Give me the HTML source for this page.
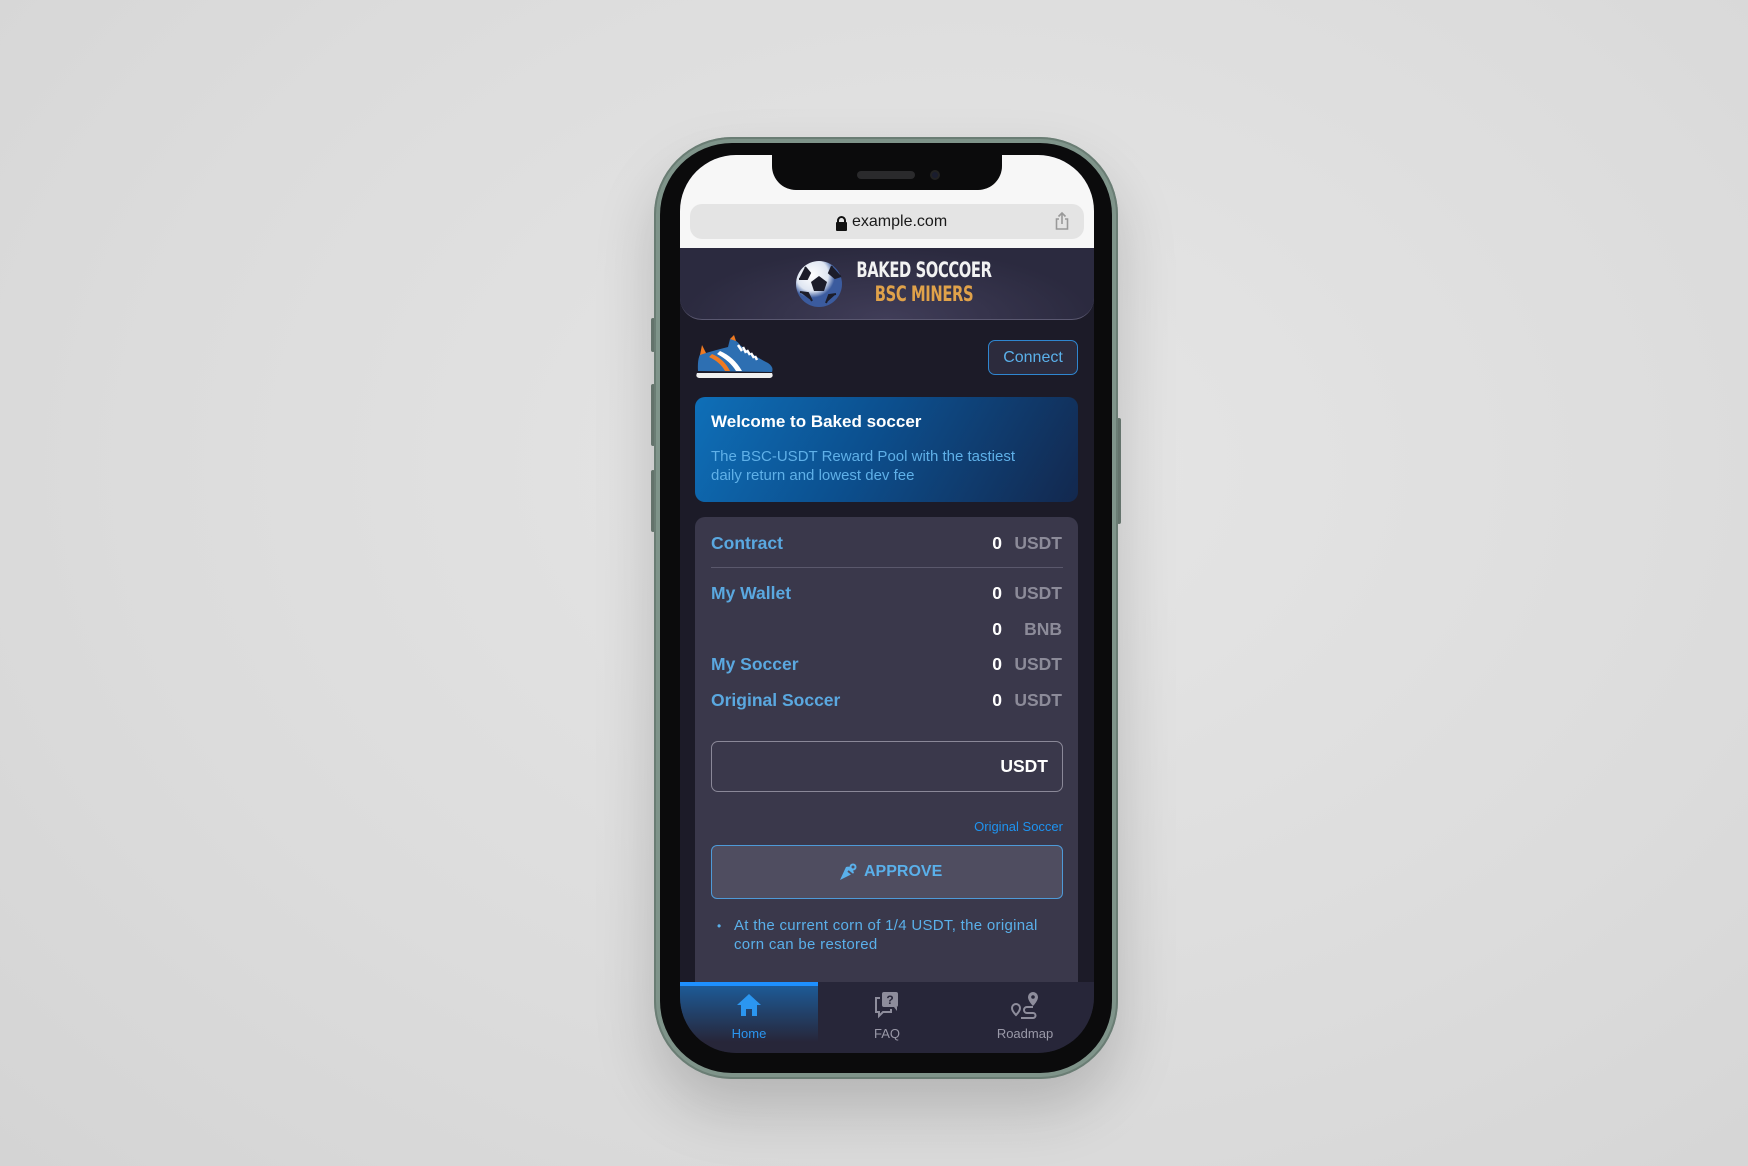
<!DOCTYPE html>
<html><head><meta charset="utf-8"><style>
*{margin:0;padding:0;box-sizing:border-box}
html,body{width:1748px;height:1166px;overflow:hidden}
body{background:radial-gradient(ellipse at 55% 40%,#e6e6e6 0%,#dcdcdc 60%,#d4d4d4 100%);font-family:"Liberation Sans",Roboto,sans-serif;position:relative}
.a{position:absolute;white-space:nowrap}
.frame{left:654px;top:137px;width:464px;height:942px;border-radius:78px;background:#7f948a;box-shadow:0 30px 60px rgba(0,0,0,.18),inset 0 0 0 2px #6a7d74}
.bezel{left:660px;top:143px;width:452px;height:930px;border-radius:72px;background:#0b0b0c}
.screen{left:680px;top:155px;width:414px;height:898px;border-radius:56px;background:#1c1b28;overflow:hidden}
.lbl{left:31px;font-size:17.5px;font-weight:bold;color:#5aa8e0}
.zero{font-size:17.5px;font-weight:bold;color:#fff;text-align:right;width:30px;left:292px}
.unit{font-size:17.5px;font-weight:bold;color:#8c8b99;text-align:right;width:60px;left:322px}
.wrap{white-space:normal}
</style></head><body>
<div class="a" style="left:651px;top:318px;width:4px;height:34px;background:#6d7e76;border-radius:2px"></div>
<div class="a" style="left:651px;top:384px;width:4px;height:62px;background:#6d7e76;border-radius:2px"></div>
<div class="a" style="left:651px;top:470px;width:4px;height:62px;background:#6d7e76;border-radius:2px"></div>
<div class="a" style="left:1117px;top:418px;width:4px;height:106px;background:#6d7e76;border-radius:2px"></div>
<div class="a frame"></div>
<div class="a bezel"></div>
<div class="a screen">
  <div class="a" style="left:0;top:0;width:414px;height:93px;background:#f7f7f7"></div>
  <div class="a" style="left:92px;top:0;width:230px;height:35px;background:#0b0b0c;border-radius:0 0 24px 24px"></div>
  <div class="a" style="left:177px;top:16px;width:58px;height:8px;background:#2a2a2c;border-radius:4px"></div>
  <div class="a" style="left:250px;top:15px;width:10px;height:10px;background:#1a1d2e;border-radius:50%;border:2px solid #222"></div>
  <div class="a" style="left:10px;top:49px;width:394px;height:35px;background:#e4e4e4;border-radius:12px"></div>
  <div class="a" style="left:157px;top:61px;width:9px;height:8px;border:2px solid #111;border-bottom:none;border-radius:5px 5px 0 0"></div>
  <div class="a" style="left:156px;top:67px;width:11px;height:9px;background:#111;border-radius:1px"></div>
  <div class="a" style="left:172px;top:58px;font-size:16px;color:#1a1a1a">example.com</div>
  <svg class="a" style="left:374px;top:56px" width="16" height="20" viewBox="0 0 16 20"><path d="M8 2v11M4.5 5.5L8 2l3.5 3.5M5 8H2.5v10h11V8H11" fill="none" stroke="#999" stroke-width="1.6"/></svg>
  <div class="a" style="left:0;top:93px;width:414px;height:72px;background:radial-gradient(ellipse at 50% 100%,#403d58,#2b2a3f 70%);border-radius:0 0 22px 22px;border-bottom:1px solid #5a5870"></div>
  <svg class="a" style="left:114px;top:104px" width="50" height="50" viewBox="0 0 50 50">
    <defs><radialGradient id="bg" cx="35%" cy="30%"><stop offset="0" stop-color="#fff"/><stop offset=".7" stop-color="#dfe6f2"/><stop offset="1" stop-color="#3b5b9e"/></radialGradient></defs>
    <circle cx="25" cy="25" r="23" fill="url(#bg)"/>
    <polygon points="25,17 33,23 30,32 20,32 17,23" fill="#1c1d2a"/>
    <path d="M11 8l5 6-3 6-8 0M38 7l-3 7 6 5 6-2M6 33l8 1 4 8M42 35l-7 1-3 8" fill="#1c1d2a" stroke="#1c1d2a" stroke-width="2"/>
  </svg>
  <div class="a" style="left:144px;top:103px;width:200px;text-align:center;font-family:'DejaVu Sans Condensed','Liberation Sans Narrow',sans-serif;font-weight:bold;font-size:21px;color:#f2f2f2;transform:scaleX(.78);letter-spacing:-0.5px">BAKED SOCCOER</div>
  <div class="a" style="left:144px;top:127px;width:200px;text-align:center;font-family:'DejaVu Sans Condensed','Liberation Sans Narrow',sans-serif;font-weight:bold;font-size:21px;color:#e0a24a;transform:scaleX(.78);letter-spacing:-0.5px">BSC MINERS</div>
  <svg class="a" style="left:14px;top:178px" width="82" height="48" viewBox="0 0 82 48">
    <path d="M3 40 L78 40 Q80 44 76 45 L5 45 Q1 44 3 40Z" fill="#f0f0f0"/>
    <path d="M4 38 Q3 22 9 18 L12 20 Q22 17 34 14 L36 6 Q42 6 46 12 Q58 22 74 30 Q80 34 78 39 Z" fill="#2d6fb2"/>
    <path d="M8 12 L12 20 L6 22Z" fill="#f07a21"/>
    <path d="M36 6 L40 2 L42 8Z" fill="#f07a21"/>
    <path d="M18 21 Q30 26 36 38 L31 38 Q26 29 15 24Z" fill="#f07a21"/>
    <path d="M26 18 Q40 24 48 38 L42 38 Q36 28 23 21Z" fill="#fff"/>
    <path d="M44 12l4 6M49 14l3 6M53 17l3 5M57 20l3 5M61 23l2 4" stroke="#fff" stroke-width="2.5"/>
  </svg>
  <div class="a" style="left:308px;top:185px;width:90px;height:35px;border:1.5px solid #2f86d0;border-radius:7px;background:#2c2b3d;color:#5ab0ea;font-size:16px;text-align:center;line-height:33px">Connect</div>
  <div class="a" style="left:15px;top:242px;width:383px;height:105px;border-radius:10px;background:linear-gradient(120deg,#0e6fb8 0%,#0c4f8e 45%,#13284e 100%)"></div>
  <div class="a" style="left:31px;top:257px;font-size:17px;font-weight:bold;color:#fff">Welcome to Baked soccer</div>
  <div class="a wrap" style="left:31px;top:292px;font-size:15px;line-height:19px;color:#5fb0e8;width:310px">The BSC-USDT Reward Pool with the tastiest daily return and lowest dev fee</div>
  <div class="a" style="left:15px;top:362px;width:383px;height:500px;border-radius:10px;background:#3a384b"></div>
  <div class="a lbl" style="top:378px">Contract</div>
  <div class="a zero" style="top:378px">0</div><div class="a unit" style="top:378px">USDT</div>
  <div class="a" style="left:31px;top:412px;width:352px;height:1px;background:#5a586c"></div>
  <div class="a lbl" style="top:428px">My Wallet</div>
  <div class="a zero" style="top:428px">0</div><div class="a unit" style="top:428px">USDT</div>
  <div class="a zero" style="top:464px">0</div><div class="a unit" style="top:464px">BNB</div>
  <div class="a lbl" style="top:499px">My Soccer</div>
  <div class="a zero" style="top:499px">0</div><div class="a unit" style="top:499px">USDT</div>
  <div class="a lbl" style="top:535px">Original Soccer</div>
  <div class="a zero" style="top:535px">0</div><div class="a unit" style="top:535px">USDT</div>
  <div class="a" style="left:31px;top:586px;width:352px;height:51px;border:1px solid #8a8898;border-radius:7px"></div>
  <div class="a" style="left:280px;top:601px;width:88px;text-align:right;font-size:17.5px;font-weight:bold;color:#fff">USDT</div>
  <div class="a" style="left:233px;top:664px;width:150px;text-align:right;font-size:13px;color:#1e93f0">Original Soccer</div>
  <div class="a" style="left:31px;top:690px;width:352px;height:54px;border:1.5px solid #4e9ad8;border-radius:6px;background:#4f4d60"></div>
  <svg class="a" style="left:158px;top:706px" width="22" height="22" viewBox="0 0 22 22"><path d="M2 19 L8 6 Q14 4 16 12 Z" fill="#5ab0ea"/><circle cx="15" cy="6" r="2.5" fill="none" stroke="#5ab0ea" stroke-width="2"/><path d="M10 10l5 4M18 10l3 1" stroke="#4f4d60" stroke-width="2"/></svg>
  <div class="a" style="left:184px;top:708px;font-size:16px;font-weight:bold;color:#5ab0ea">APPROVE</div>
  <div class="a" style="left:37px;top:764px;font-size:12px;color:#5ab0ea">•</div>
  <div class="a wrap" style="left:54px;top:761px;width:330px;font-size:15px;line-height:19px;color:#5ab0ea;letter-spacing:0.3px">At the current corn of 1/4 USDT, the original corn can be restored</div>
  <div class="a" style="left:0;top:827px;width:414px;height:71px;background:#272639"></div>
  <div class="a" style="left:0;top:827px;width:138px;height:60px;background:linear-gradient(#1d5a96,#272639);border-top:4px solid #1e90ff"></div>
  <svg class="a" style="left:56px;top:837px" width="26" height="26" viewBox="0 0 26 26"><path d="M13 2 L25 13 L21 13 L21 24 L16 24 L16 17 L10 17 L10 24 L5 24 L5 13 L1 13Z" fill="#2b96f0"/></svg>
  <div class="a" style="left:0;top:871px;width:138px;text-align:center;font-size:13px;color:#2b96f0">Home</div>
  <svg class="a" style="left:193px;top:836px" width="28" height="28" viewBox="0 0 28 28"><rect x="9" y="1" width="16" height="15" rx="2" fill="#8e8d9c"/><path d="M21 16l3 4v-4" fill="#8e8d9c"/><text x="17" y="13" font-size="12" font-weight="bold" fill="#272639" text-anchor="middle" font-family="Liberation Sans">?</text><path d="M7 7H3v14h3v4l4-4h8v-3" fill="none" stroke="#8e8d9c" stroke-width="2"/></svg>
  <div class="a" style="left:138px;top:871px;width:138px;text-align:center;font-size:13px;color:#9a99a8">FAQ</div>
  <svg class="a" style="left:331px;top:836px" width="28" height="28" viewBox="0 0 28 28"><path d="M22 1a5 5 0 0 1 5 5c0 4-5 9-5 9s-5-5-5-9a5 5 0 0 1 5-5z" fill="#8e8d9c"/><circle cx="22" cy="6" r="1.8" fill="#272639"/><path d="M5 13a4 4 0 0 1 4 4c0 3-4 7-4 7s-4-4-4-7a4 4 0 0 1 4-4z" fill="none" stroke="#8e8d9c" stroke-width="2"/><path d="M22 16h-6a3 3 0 0 0 0 6h6a2.5 2.5 0 0 1 0 5H10" fill="none" stroke="#8e8d9c" stroke-width="2"/></svg>
  <div class="a" style="left:276px;top:871px;width:138px;text-align:center;font-size:13px;color:#9a99a8">Roadmap</div>
</div>
</body></html>
